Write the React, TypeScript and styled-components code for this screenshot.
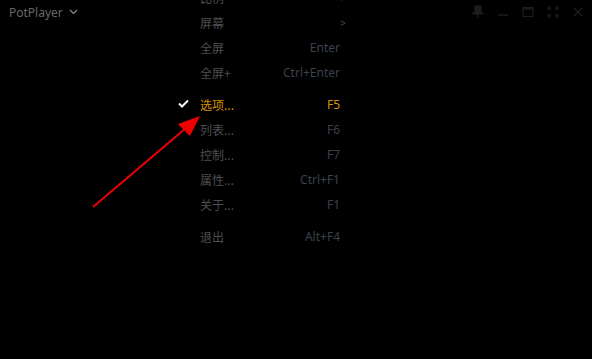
import styled, { createGlobalStyle } from "styled-components";

const GlobalStyle = createGlobalStyle`
  html, body {
    margin: 0;
    padding: 0;
    background: #000;
  }
  body {
    font-family: "Noto Sans", "Noto Sans CJK SC", sans-serif;
  }
`;

const Screen = styled.div`
  position: relative;
  width: 592px;
  height: 359px;
  background: #000;
  overflow: hidden;
`;

const TitleBar = styled.div`
  display: flex;
  align-items: center;
  justify-content: space-between;
  height: 26px;
  padding: 0 6px 0 9px;
`;

const Brand = styled.div`
  display: flex;
  align-items: center;
  gap: 6px;
  color: #686868;
  font-size: 12px;
  margin-top: -2px;
`;

const WinButtons = styled.div`
  display: flex;
  align-items: center;
  gap: 9px;
  margin-top: -2px;
`;

const WinBtn = styled.div`
  width: 16px;
  height: 16px;
  display: flex;
  align-items: center;
  justify-content: center;
`;

const Menu = styled.div`
  position: absolute;
  left: 190px;
  top: -15px;
  width: 160px;
  display: flex;
  flex-direction: column;
`;

const Row = styled.div<{ $active?: boolean }>`
  position: relative;
  display: flex;
  align-items: center;
  justify-content: space-between;
  height: 25px;
  padding: 0 10px 0 10px;
  font-size: 12px;
  color: ${(p) => (p.$active ? "#d99400" : "#4e4e4e")};
`;

const Label = styled.span`
  font-family: "Noto Sans CJK SC", "Noto Sans", sans-serif;
`;

const Key = styled.span<{ $active?: boolean }>`
  color: ${(p) => (p.$active ? "#d99400" : "#3a424c")};
`;

const Sub = styled.span`
  position: absolute;
  right: 4px;
  color: #4a4a4a;
  font-size: 10px;
`;

const Check = styled.svg`
  position: absolute;
  left: -12px;
  top: 7px;
`;

const Separator = styled.div`
  height: 7px;
`;

const Arrow = styled.svg`
  position: absolute;
  left: 0;
  top: 0;
  pointer-events: none;
`;

type Item = { label: string; key?: string; sub?: boolean; active?: boolean; sep?: boolean };

const items: Item[] = [
  { label: "比例", sub: true },
  { label: "屏幕", sub: true },
  { label: "全屏", key: "Enter" },
  { label: "全屏+", key: "Ctrl+Enter" },
  { label: "", sep: true },
  { label: "选项...", key: "F5", active: true },
  { label: "列表...", key: "F6" },
  { label: "控制...", key: "F7" },
  { label: "属性...", key: "Ctrl+F1" },
  { label: "关于...", key: "F1" },
  { label: "", sep: true },
  { label: "退出", key: "Alt+F4" },
];

const dim = "#1d1d1d";

export default function App() {
  return (
    <Screen>
      <GlobalStyle />
      <TitleBar>
        <Brand>
          PotPlayer
          <svg width="9" height="6" viewBox="0 0 9 6">
            <path d="M1 1l3.5 3.5L8 1" stroke="#8a8a8a" strokeWidth="1.2" fill="none" />
          </svg>
        </Brand>
        <WinButtons>
          <WinBtn>
            <svg width="12" height="14" viewBox="0 0 12 14">
              <path d="M3 1h6v6H3z M1 8h10v1H1z M6 9v4" stroke={dim} strokeWidth="1.2" fill={dim} />
            </svg>
          </WinBtn>
          <WinBtn>
            <svg width="12" height="12" viewBox="0 0 12 12">
              <path d="M1 9h10" stroke={dim} strokeWidth="1.4" />
            </svg>
          </WinBtn>
          <WinBtn>
            <svg width="12" height="12" viewBox="0 0 12 12">
              <rect x="1" y="1.5" width="10" height="9" stroke={dim} strokeWidth="1.2" fill="none" />
              <path d="M1 3h10" stroke={dim} strokeWidth="1.5" />
            </svg>
          </WinBtn>
          <WinBtn>
            <svg width="12" height="12" viewBox="0 0 12 12">
              <path d="M1 4V1h3M8 1h3v3M11 8v3H8M4 11H1V8M1 1l3 3M11 1L8 4M11 11L8 8M1 11l3-3" stroke={dim} strokeWidth="1.1" fill="none" />
            </svg>
          </WinBtn>
          <WinBtn>
            <svg width="12" height="12" viewBox="0 0 12 12">
              <path d="M1.5 1.5l9 9M10.5 1.5l-9 9" stroke={dim} strokeWidth="1.2" />
            </svg>
          </WinBtn>
        </WinButtons>
      </TitleBar>

      <Menu>
        {items.map((it, i) =>
          it.sep ? (
            <Separator key={i} />
          ) : (
            <Row key={i} $active={it.active}>
              {it.active && (
                <Check width="11" height="9" viewBox="0 0 11 9">
                  <path d="M1 4.5l3 3L10 1.5" stroke="#f2f2f2" strokeWidth="2" fill="none" />
                </Check>
              )}
              <Label>{it.label}</Label>
              {it.key && <Key $active={it.active}>{it.key}</Key>}
              {it.sub && <Sub>&gt;</Sub>}
            </Row>
          )
        )}
      </Menu>

      <Arrow width="592" height="359" viewBox="0 0 592 359">
        <line x1="93" y1="207" x2="186" y2="128" stroke="#ee0000" strokeWidth="2" />
        <polygon points="200,116 178,124 190,136" fill="#ee0000" />
      </Arrow>
    </Screen>
  );
}
